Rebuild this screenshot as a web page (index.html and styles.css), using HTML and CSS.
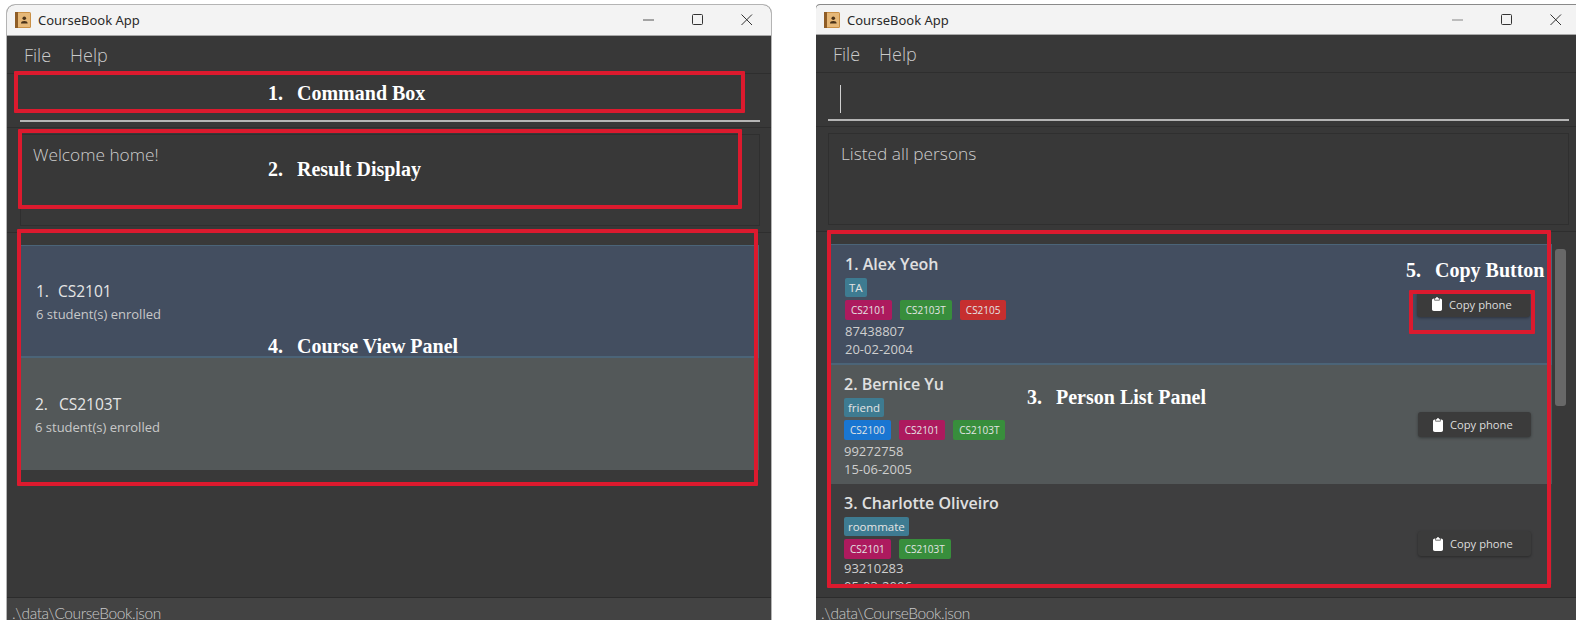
FILE: index.html
```html
<!DOCTYPE html>
<html lang="en">
<head>
<meta charset="utf-8">
<title>CourseBook App annotated</title>
<link rel="stylesheet" href="styles.css">
</head>
<body>
<svg class="defs" width="0" height="0" aria-hidden="true">
  <symbol id="clip" viewBox="0 0 10 14"><path d="M3 1.2h.9C4.1.4 4.5 0 5 0s.9.4 1.1 1.2H7v1.6H3zM1.8 1.4H2.4v2.2h5.2V1.4h.6C9.2 1.4 10 2.2 10 3.1v9.2c0 1-.8 1.7-1.8 1.7H1.8C.8 14 0 13.3 0 12.3V3.1C0 2.2.8 1.4 1.8 1.4z" fill="#fff"/></symbol>
  <symbol id="appicon" viewBox="0 0 16 16"><rect width="16" height="16" rx="1.5" fill="#c98f45"/><rect width="3" height="16" fill="#8f5d26"/><rect x="3" y="1" width="12" height="14" fill="#e6b878"/><circle cx="9.3" cy="6.3" r="1.800" fill="#4a3218"/><path d="M6 11.5c0-1.800 1.300-2.500 3.300-2.500s3.300.7 3.300 2.500z" fill="#4a3218"/></symbol>
</svg>

<div class="window window-left">
  <header class="titlebar">
    <svg class="app-icon"><use href="#appicon"/></svg>
    <span class="app-title">CourseBook App</span>
    <div class="controls">
      <span class="ctl"><svg width="12" height="12" viewBox="0 0 12 12"><path d="M0 6h11" stroke="#555" fill="none"/></svg></span>
      <span class="ctl"><svg width="12" height="12" viewBox="0 0 12 12"><rect x=".5" y=".5" width="10" height="10" rx="1" stroke="#333" fill="none"/></svg></span>
      <span class="ctl"><svg width="12" height="12" viewBox="0 0 12 12"><path d="M.5.500l10.500 10.500M11 .5L.5 11" stroke="#333" fill="none"/></svg></span>
    </div>
  </header>
  <nav class="menu"><span>File</span><span>Help</span></nav>
  <section class="command"><div class="input"></div></section>
  <section class="result"><div class="result-box">Welcome home!</div></section>
  <section class="list-wrap">
    <div class="list">
      <article class="course selected">
        <div class="course-name"><span class="num">1.</span>CS2101</div>
        <div class="course-sub">6 student(s) enrolled</div>
      </article>
      <article class="course alt">
        <div class="course-name"><span class="num">2.</span>CS2103T</div>
        <div class="course-sub">6 student(s) enrolled</div>
      </article>
    </div>
  </section>
  <footer class="status">.\data\CourseBook.json</footer>
</div>

<div class="window window-right">
  <header class="titlebar">
    <svg class="app-icon"><use href="#appicon"/></svg>
    <span class="app-title">CourseBook App</span>
    <div class="controls">
      <span class="ctl"><svg width="12" height="12" viewBox="0 0 12 12"><path d="M0 6h11" stroke="#aaa" stroke-width="1.500" fill="none"/></svg></span>
      <span class="ctl"><svg width="12" height="12" viewBox="0 0 12 12"><rect x=".5" y=".5" width="10" height="10" rx="1" stroke="#333" fill="none"/></svg></span>
      <span class="ctl"><svg width="12" height="12" viewBox="0 0 12 12"><path d="M.5.500l10.500 10.500M11 .5L.5 11" stroke="#333" fill="none"/></svg></span>
    </div>
  </header>
  <nav class="menu"><span>File</span><span>Help</span></nav>
  <section class="command"><div class="input"><i class="caret"></i></div></section>
  <section class="result"><div class="result-box">Listed all persons</div></section>
  <section class="list-wrap">
    <div class="list">
      <article class="person selected">
        <div class="info">
          <div class="name">1. Alex Yeoh</div>
          <div class="tags"><span class="role">TA</span></div>
          <div class="tags codes"><span class="pink">CS2101</span><span class="green">CS2103T</span><span class="red">CS2105</span></div>
          <div class="line first">87438807</div>
          <div class="line">20-02-2004</div>
        </div>
        <button class="copy"><svg class="clip"><use href="#clip"/></svg>Copy phone</button>
      </article>
      <article class="person alt">
        <div class="info">
          <div class="name">2. Bernice Yu</div>
          <div class="tags"><span class="role">friend</span></div>
          <div class="tags codes"><span class="blue">CS2100</span><span class="pink">CS2101</span><span class="green">CS2103T</span></div>
          <div class="line first">99272758</div>
          <div class="line">15-06-2005</div>
        </div>
        <button class="copy"><svg class="clip"><use href="#clip"/></svg>Copy phone</button>
      </article>
      <article class="person plain">
        <div class="info">
          <div class="name">3. Charlotte Oliveiro</div>
          <div class="tags"><span class="role">roommate</span></div>
          <div class="tags codes"><span class="pink">CS2101</span><span class="green">CS2103T</span></div>
          <div class="line first">93210283</div>
          <div class="line">05-03-2006</div>
        </div>
        <button class="copy"><svg class="clip"><use href="#clip"/></svg>Copy phone</button>
      </article>
    </div>
    <div class="scroll-track"><div class="scroll-thumb"></div></div>
  </section>
  <footer class="status">.\data\CourseBook.json</footer>
</div>

<div class="box box1"></div>
<div class="box box2"></div>
<div class="box box3"></div>
<div class="box box4"></div>
<div class="box box5"></div>
<div class="label label1"><b>1.</b>Command Box</div>
<div class="label label2"><b>2.</b>Result Display</div>
<div class="label label3"><b>3.</b>Person List Panel</div>
<div class="label label4"><b>4.</b>Course View Panel</div>
<div class="label label5"><b>5.</b>Copy Button</div>
</body>
</html>
```
FILE: styles.css
```css
* { box-sizing: border-box; }
html, body { margin: 0; height: 620px; overflow: hidden; background: #fff; }
body {
  position: relative;
  display: flex;
  gap: 45px;
  padding: 5px 0 0 7px;
  font-family: "Open Sans", sans-serif;
  width: 1576px;
}
.defs { position: absolute; }

.window {
  --pl: 13px;
  flex: 0 0 764px;
  height: 615px;
  display: flex;
  flex-direction: column;
  background: #383838;
  overflow: hidden;
}
.window-left { border-radius: 8px 8px 0 0; box-shadow: 0 0 0 1px #b4b4b4; }
.window-right { --pl: 12px; border-radius: 4px 0 0 0; box-shadow: 0 -1px 0 #8a8a8a; }

.titlebar {
  height: 31px;
  flex: none;
  display: flex;
  align-items: center;
  padding-left: 8px;
  background: #f3f3f3;
  border-bottom: 1px solid #a8a8a8;
  font-family: "Noto Sans", sans-serif;
}
.window-right .titlebar { height: 30px; }
.app-icon { width: 16px; height: 16px; }
.app-title { margin-left: 7px; font-size: 13px; color: #2a2a2a; }
.controls { margin-left: auto; display: flex; }
.ctl { width: 49px; height: 30px; display: flex; align-items: center; justify-content: center; }

.menu {
  height: 38px;
  flex: none;
  display: flex;
  gap: 19px;
  align-items: center;
  padding-left: 17px;
  border-bottom: 1px solid #2e2e2e;
  font-size: 18px;
  font-weight: 300;
  color: #cacaca;
}

.command {
  height: 54px;
  flex: none;
  padding: 0 11px 5px var(--pl);
  border-bottom: 1px solid #2e2e2e;
  display: flex;
}
.input {
  flex: 1;
  border-bottom: 2px solid #b5b5b5;
  padding: 12px 0 0 12px;
}
.caret { display: block; width: 1px; height: 28px; background: #d0d0d0; }

.result {
  height: 105px;
  flex: none;
  padding: 6px 11px 6px var(--pl);
  border-bottom: 1px solid #2e2e2e;
  display: flex;
}
.result-box {
  flex: 1;
  border: 1px solid #2f2f2f;
  padding: 8px 12px;
  font-size: 17.300px;
  line-height: 24px;
  font-weight: 300;
  color: #cdcdcd;
}

.list-wrap {
  flex: 1;
  display: flex;
  padding: 12px 12px 13px var(--pl);
  min-height: 0;
  background: #393939;
}
.window-right .list-wrap { padding-right: 11px; padding-bottom: 13px; }
.list { flex: 1; overflow: hidden; }

.selected { background: #434e60; border: 1px solid #4b6478; border-bottom-width: 2px; }
.alt { background: #535859; }
.plain { background: #3e3e3f; }

.course { height: 112px; padding: 2px 15px 0; display: flex; flex-direction: column; justify-content: center; }
.course.selected { height: 113px; }
.course-name { font-size: 15.500px; line-height: 24px; font-weight: 500; color: #e6e6e6; }
.course-sub { font-size: 13px; line-height: 22px; color: #c8c8c8; }
.num { margin-right: 11px; }
.selected .num { margin-right: 9px; }

.person { height: 119px; padding-left: 16px; padding-right: 21px; display: flex; align-items: center; justify-content: space-between; }
.person.selected { height: 121px; padding-right: 21px; }
.info { padding-top: 8px; height: 119px; }
.name { font-size: 16px; line-height: 22px; font-weight: 600; color: #e0e0e0; }
.tags { display: flex; margin-top: 3px; height: 19px; }
.tags span { border-radius: 2px; color: #e4e4e4; }
.role { background: #3e7b91; font-size: 11.500px; line-height: 19px; font-weight: 500; padding: 0 4px; }
.codes { gap: 8px; height: 20px; }
.codes span { font-size: 10px; line-height: 20px; padding: 0 6px; }
.pink { background: #ad1a5e; }
.green { background: #388e3c; }
.red { background: #c62f2f; }
.blue { background: #1976d2; }
.line { font-size: 13px; line-height: 18px; color: #cfcfcf; }
.first { margin-top: 2px; }
.plain .first { margin-top: 0; }

.copy {
  width: 113px;
  height: 25px;
  padding: 0 0 0 15px;
  display: flex;
  align-items: center;
  gap: 7px;
  border: 0;
  border-radius: 3px;
  background: #3b3b3b;
  box-shadow: 0 1px 3px rgba(0, 0, 0, .35);
  font: 11.200px "Open Sans", sans-serif;
  color: #dedede;
}
.clip { width: 10px; height: 14px; }

.scroll-track { flex: 0 0 17px; padding: 5px 3px; }
.scroll-thumb { height: 157px; border-radius: 3px; background: #686868; }

.status {
  height: 23px;
  flex: none;
  padding-left: 5px;
  background: #434343;
  border-top: 1px solid #2c2c2c;
  font-family: Lato, sans-serif;
  font-size: 15.500px;
  letter-spacing: -.4px;
  line-height: 30px;
  font-weight: 300;
  color: #c8c8c8;
  white-space: nowrap;
  overflow: hidden;
}

.box { position: absolute; border: 4px solid #dc1a2e; border-radius: 1px; }
.box1 { left: 14px; top: 71px; width: 731px; height: 42px; }
.box2 { left: 18px; top: 129px; width: 724px; height: 80px; }
.box3 { left: 827px; top: 230px; width: 724px; height: 358px; }
.box4 { left: 17px; top: 229px; width: 741px; height: 257px; }
.box5 { left: 1409px; top: 290px; width: 126px; height: 44px; }

.label {
  position: absolute;
  display: flex;
  font: bold 20px/24px "Liberation Serif", serif;
  color: #fff;
  white-space: nowrap;
}
.label b { width: 29px; }
.label1 { left: 268px; top: 81px; }
.label2 { left: 268px; top: 157px; }
.label3 { left: 1027px; top: 385px; }
.label4 { left: 268px; top: 334px; }
.label5 { left: 1406px; top: 258px; }
```
